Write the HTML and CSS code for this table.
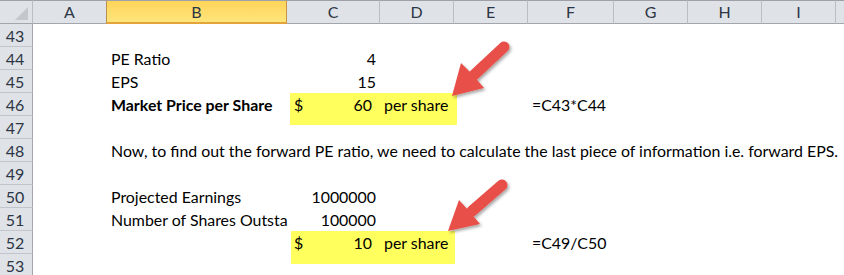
FILE: index.html
```html
<!DOCTYPE html>
<html>
<head>
<meta charset="utf-8">
<link rel="stylesheet" href="styles.css">
</head>
<body>
<div class="sheet">
  <div class="ch corner"><span class="tri"></span></div>
  <div class="ch">A</div>
  <div class="ch sel">B</div>
  <div class="ch">C</div>
  <div class="ch">D</div>
  <div class="ch">E</div>
  <div class="ch">F</div>
  <div class="ch">G</div>
  <div class="ch">H</div>
  <div class="ch">I</div>
  <div class="ch last"></div>

  <div class="rh">43</div>
  <div class="rh">44</div>
  <div class="rh">45</div>
  <div class="rh">46</div>
  <div class="rh">47</div>
  <div class="rh">48</div>
  <div class="rh">49</div>
  <div class="rh">50</div>
  <div class="rh">51</div>
  <div class="rh">52</div>
  <div class="rh">53</div>

  <div class="hl hl-top"></div>
  <div class="hl hl-bot"></div>

  <div class="cell cB r44">PE Ratio</div>
  <div class="cell num cC r44">4</div>
  <div class="cell cB r45">EPS</div>
  <div class="cell num cC r45">15</div>
  <div class="cell cB r46 bold">Market Price per Share</div>
  <div class="cell acc cC r46"><span>$</span><span>60</span></div>
  <div class="cell cD r46">per share</div>
  <div class="cell cF r46">=C43*C44</div>
  <div class="cell span r48">Now, to find out the forward PE ratio, we need to calculate the last piece of information i.e. forward EPS.</div>
  <div class="cell cB r50">Projected Earnings</div>
  <div class="cell num cC r50">1000000</div>
  <div class="cell cB r51">Number of Shares Outsta</div>
  <div class="cell num cC r51">100000</div>
  <div class="cell acc cC r52"><span>$</span><span>10</span></div>
  <div class="cell cD r52">per share</div>
  <div class="cell cF r52">=C49/C50</div>

  <svg class="arrows" width="844" height="275" viewBox="0 0 844 275">
    <defs>
      <filter id="sh" x="-20%" y="-20%" width="150%" height="150%">
        <feDropShadow dx="1.5" dy="2" stdDeviation="1.6" flood-color="#000" flood-opacity="0.35"/>
      </filter>
    </defs>
    <g filter="url(#sh)" fill="#E8504A" stroke="#E8504A">
      <line x1="504" y1="47" x2="474" y2="75" stroke-width="11" stroke-linecap="round"/>
      <polygon stroke="none" points="452,96 461,63 472,74 484,88"/>
      <line x1="502" y1="185" x2="472" y2="211" stroke-width="11" stroke-linecap="round"/>
      <polygon stroke="none" points="448,231 459,200 469,211 480,224"/>
    </g>
  </svg>
</div>
</body>
</html>
```
FILE: styles.css
```css
* { box-sizing: border-box; }
html, body { margin: 0; padding: 0; background: #ffffff; }
body { font-family: Lato, "Open Sans", sans-serif; }

.sheet {
  position: relative;
  width: 844px;
  height: 275px;
  overflow: hidden;
  display: grid;
  grid-template-columns: 33px 74px 180px 93px 74px 74px 86px 74px 74px 74px 1fr;
  grid-template-rows: 24px repeat(11, 23px);
  background: #ffffff;
}

.ch {
  grid-row: 1;
  background: #dfe3e8;
  border-top: 1px solid #9ea2a8;
  border-bottom: 1px solid #a3a7ad;
  border-right: 1px solid #b9bec5;
  color: #2d3645;
  font-size: 16px;
  line-height: 22px;
  text-align: center;
}
.ch.sel {
  background: linear-gradient(#ffd45a, #ffe57c);
  border-bottom: 2px solid #e3a43a;
  border-right: 1px solid #c59445;
  border-left: 1px solid #b89050;
  margin-left: -1px;
}
.ch.last { border-right: none; }
.corner {
  position: relative;
  display: flex;
  align-items: flex-end;
  justify-content: flex-end;
  padding: 0 4px 3px 0;
}
.tri {
  width: 0;
  height: 0;
  border-left: 13px solid transparent;
  border-bottom: 13px solid #c4c8cd;
}

.rh {
  grid-column: 1;
  background: #dfe3e8;
  border-right: 1px solid #a3a7ad;
  border-bottom: 1px solid #c2c6cc;
  color: #2d3645;
  font-size: 16px;
  line-height: 23px;
  text-align: center;
  padding-right: 2px;
}

.hl {
  background: #ffff5e;
  grid-column: 4 / 6;
  align-self: start;
}
.hl-top { grid-row: 5; height: 32px; margin-left: 3px; margin-right: -3px; }
.hl-bot { grid-row: 11; height: 33px; margin-left: 4px; margin-right: -1px; }

.cell {
  font-size: 15.9px;
  line-height: 23px;
  color: #000;
  white-space: nowrap;
  padding: 0 4px;
}
.bold { font-weight: 700; }
.num { text-align: right; }
.acc { display: flex; justify-content: space-between; padding: 0 8px 0 7px; }
.span { grid-column: 3 / 12; }

.cB { grid-column: 3; }
.cC { grid-column: 4; }
.cD { grid-column: 5; }
.cF { grid-column: 7; }
.r44 { grid-row: 3; }
.r45 { grid-row: 4; }
.r46 { grid-row: 5; }
.r48 { grid-row: 7; }
.r50 { grid-row: 9; }
.r51 { grid-row: 10; }
.r52 { grid-row: 11; }

.arrows {
  position: absolute;
  left: 0;
  top: 0;
  pointer-events: none;
}
```
